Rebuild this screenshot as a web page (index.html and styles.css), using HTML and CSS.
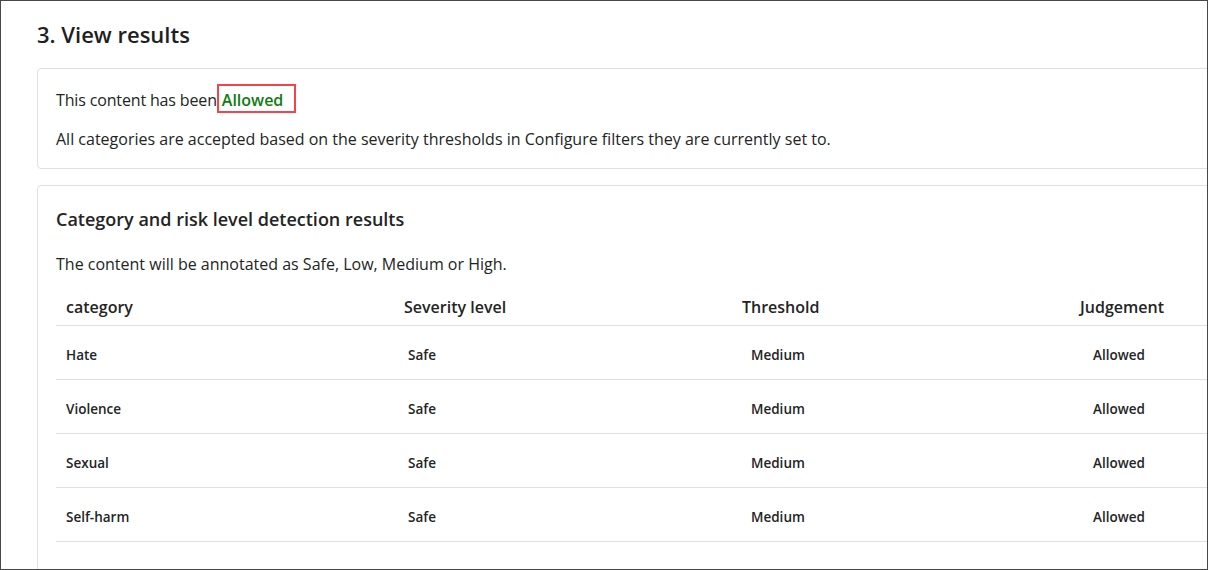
FILE: index.html
```html
<!DOCTYPE html>
<html lang="en">
<head>
<meta charset="utf-8">
<title>View results</title>
<link rel="stylesheet" href="styles.css">
</head>
<body>
<div class="frame">
  <h2 class="title">3. View results</h2>
  <section class="card summary">
    <p class="line first">This content has been <span class="verdict">Allowed</span></p>
    <p class="line">All categories are accepted based on the severity thresholds in Configure filters they are currently set to.</p>
  </section>
  <section class="card results">
    <h3 class="subtitle">Category and risk level detection results</h3>
    <p class="line note">The content will be annotated as Safe, Low, Medium or High.</p>
    <table class="grid">
      <thead>
        <tr>
          <th>category</th>
          <th>Severity level</th>
          <th>Threshold</th>
          <th>Judgement</th>
        </tr>
      </thead>
      <tbody>
        <tr><td class="c1">Hate</td><td class="c2">Safe</td><td class="c3">Medium</td><td class="c4">Allowed</td></tr>
        <tr><td class="c1">Violence</td><td class="c2">Safe</td><td class="c3">Medium</td><td class="c4">Allowed</td></tr>
        <tr><td class="c1">Sexual</td><td class="c2">Safe</td><td class="c3">Medium</td><td class="c4">Allowed</td></tr>
        <tr><td class="c1">Self-harm</td><td class="c2">Safe</td><td class="c3">Medium</td><td class="c4">Allowed</td></tr>
      </tbody>
    </table>
  </section>
</div>
</body>
</html>
```
FILE: styles.css
```css
* { box-sizing: border-box; }
html, body { margin: 0; padding: 0; background: #ffffff; }
body {
  font-family: "Open Sans", "Noto Sans", sans-serif;
  color: #242424;
  width: 1208px;
  height: 570px;
  overflow: hidden;
}
.frame {
  width: 1208px;
  height: 570px;
  border: 1px solid #474747;
  overflow: hidden;
  padding: 17px 0 0 36px;
  background: #fff;
}
.title {
  margin: 0 0 18px 0;
  font-size: 22px;
  line-height: 32px;
  font-weight: 600;
  color: #1f1f1f;
  white-space: nowrap;
}
.card {
  width: 1500px;
  border: 1px solid #e0e0e0;
  border-radius: 4px;
  background: #fff;
  padding: 0 18px;
}
.summary {
  padding-top: 15px;
  padding-bottom: 17px;
  margin-bottom: 16px;
}
.line {
  margin: 0;
  font-size: 16px;
  line-height: 24px;
  white-space: nowrap;
}
.first {
  line-height: 33px;
  margin-bottom: 10px;
  letter-spacing: -0.15px;
}
.verdict {
  display: inline-block;
  vertical-align: top;
  height: 29px;
  line-height: 23px;
  border: 2px solid #f2444b;
  padding: 3px 11px 1px 3px;
  margin-left: -4px;
  color: #107c10;
  font-weight: 600;
  letter-spacing: 0;
}
.results {
  padding-top: 21px;
  height: 500px;
}
.subtitle {
  margin: 0 0 21px 0;
  font-size: 18px;
  line-height: 24px;
  font-weight: 600;
  white-space: nowrap;
}
.note { margin-bottom: 12px; }
.grid {
  border-collapse: collapse;
  table-layout: fixed;
  width: 1352px;
}
.grid th, .grid td {
  width: 338px;
  text-align: left;
  white-space: nowrap;
  border-bottom: 1px solid #e0e0e0;
}
.grid th {
  font-size: 16px;
  font-weight: 600;
  line-height: 22px;
  padding: 8px 10px 7px 10px;
}
.grid td {
  font-size: 13.5px;
  font-weight: 600;
  line-height: 20px;
  padding: 19px 10px 14px 10px;
}
.grid td.c2 { padding-left: 14px; }
.grid td.c3 { padding-left: 19px; }
.grid td.c4 { padding-left: 23px; }
```
